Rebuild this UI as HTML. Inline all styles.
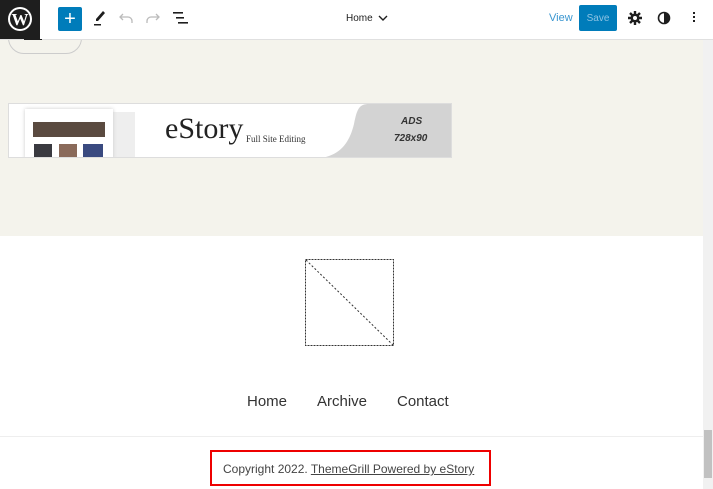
<!DOCTYPE html>
<html><head><style>
*{margin:0;padding:0;box-sizing:border-box}
body{width:713px;height:489px;overflow:hidden;background:#fff;font-family:"Liberation Sans",sans-serif;position:relative}
.abs{position:absolute}
</style></head><body>
<div class="abs" style="left:0;top:40px;width:703px;height:196px;background:#f4f3ec"></div>
<div class="abs" style="left:8px;top:22px;width:74px;height:32px;border:1px solid #ccc;border-radius:16px;background:#f4f3ec"></div>
<div class="abs" style="left:0;top:0;width:713px;height:40px;background:#fff;border-bottom:1px solid #e0e0e0"></div>
<div class="abs" style="left:0;top:0;width:40px;height:39px;background:#1e1e1e"></div>
<div class="abs" style="left:24px;top:39px;width:18px;height:1px;background:#1e1e1e"></div>
<svg class="abs" style="left:7px;top:6px" width="26" height="26" viewBox="0 0 26 26"><circle cx="13" cy="13" r="12" fill="#fff"/><circle cx="13" cy="13" r="10" fill="#1e1e1e"/><text x="13" y="19" font-family="Liberation Serif" font-size="17" font-weight="bold" fill="#fff" text-anchor="middle">W</text></svg>
<div class="abs" style="left:58px;top:7px;width:24px;height:24px;background:#007cba;border-radius:2px;color:#fff;font-size:20px;line-height:24px;text-align:center">+</div>
<svg class="abs" style="left:92px;top:9px" width="16" height="20"><path d="M11 2 L13 4 L6 12 L4 12 L4 10Z" fill="#1e1e1e"/><rect x="2" y="15" width="7" height="1.5" fill="#1e1e1e"/></svg>
<svg class="abs" style="left:119px;top:11px" width="14" height="14"><path d="M4 3 L1 6 L4 9 M1 6 H9 a4 4 0 0 1 4 4 V12" stroke="#bbb" stroke-width="1.3" fill="none"/></svg>
<svg class="abs" style="left:146px;top:11px" width="14" height="14"><path d="M10 3 L13 6 L10 9 M13 6 H5 a4 4 0 0 0 -4 4 V12" stroke="#bbb" stroke-width="1.3" fill="none"/></svg>
<svg class="abs" style="left:173px;top:11px" width="16" height="14"><rect x="0" y="1" width="10" height="1.6" fill="#1e1e1e"/><rect x="3" y="6" width="8" height="1.6" fill="#1e1e1e"/><rect x="5" y="11" width="10" height="1.6" fill="#1e1e1e"/></svg>
<div class="abs" style="left:346px;top:13px;font-size:10px;line-height:12px;color:#1e1e1e">Home</div>
<svg class="abs" style="left:378px;top:15px" width="10" height="7"><path d="M1 1 L5 5 L9 1" stroke="#1e1e1e" stroke-width="1.4" fill="none"/></svg>
<div class="abs" style="left:549px;top:12px;font-size:11px;line-height:13px;color:#3a96d0">View</div>
<div class="abs" style="left:579px;top:5px;width:38px;height:26px;background:#007cba;color:#8ec3e3;font-size:10px;line-height:27px;text-align:center;border-radius:2px">Save</div>
<svg class="abs" style="left:628px;top:11px" width="14" height="14" viewBox="0 0 14 14"><circle cx="7" cy="7" r="4.5" fill="#1e1e1e"/><g stroke="#1e1e1e" stroke-width="2.4"><path d="M7 0V14M0 7H14M2 2L12 12M12 2L2 12"/></g><circle cx="7" cy="7" r="2" fill="#fff"/></svg>
<svg class="abs" style="left:657px;top:11px" width="14" height="14"><circle cx="7" cy="7" r="5.5" stroke="#1e1e1e" stroke-width="1.6" fill="none"/><path d="M7 1.5 A5.5 5.5 0 0 1 7 12.5Z" fill="#1e1e1e"/></svg>
<div class="abs" style="left:693px;top:12px;width:2px;height:2px;background:#1e1e1e;box-shadow:0 4px #1e1e1e,0 8px #1e1e1e"></div>
<div class="abs" style="left:8px;top:103px;width:444px;height:55px;background:#fff;border:1px solid #ddd;overflow:hidden">
 <div class="abs" style="left:102px;top:8px;width:24px;height:47px;background:#eee"></div>
 <div class="abs" style="left:16px;top:5px;width:88px;height:50px;background:#fff;box-shadow:0 0 4px #ccc"></div>
 <div class="abs" style="left:24px;top:18px;width:72px;height:15px;background:#5a4a40"></div>
 <div class="abs" style="left:25px;top:40px;width:18px;height:15px;background:#3a3a40"></div>
 <div class="abs" style="left:50px;top:40px;width:18px;height:15px;background:#8a6a5a"></div>
 <div class="abs" style="left:74px;top:40px;width:20px;height:15px;background:#3a4a80"></div>
 <svg class="abs" style="left:300px;top:0" width="144" height="55"><path d="M50 0 H144 V55 H0 C30 55 40 40 45 20 C48 5 50 0 60 0Z" fill="#d3d3d3"/></svg>
 <div class="abs" style="left:156px;top:8px;font-family:'Liberation Serif',serif;font-size:30px;color:#222">eStory</div>
 <div class="abs" style="left:237px;top:30px;font-family:'Liberation Serif',serif;font-size:9px;color:#333">Full Site Editing</div>
 <div class="abs" style="left:392px;top:12px;font-size:10px;font-style:italic;font-weight:bold;color:#333">ADS</div>
 <div class="abs" style="left:385px;top:29px;font-size:10px;font-style:italic;font-weight:bold;color:#333">728x90</div>
</div>
<svg class="abs" style="left:305px;top:259px" width="90" height="88"><rect x="0.5" y="0.5" width="88" height="86" fill="none" stroke="#333" stroke-dasharray="2 1"/><line x1="1" y1="1" x2="88" y2="86" stroke="#333" stroke-dasharray="2 2"/></svg>
<div class="abs" style="left:247px;top:393px;font-size:15px;color:#333">Home</div>
<div class="abs" style="left:317px;top:393px;font-size:15px;color:#333">Archive</div>
<div class="abs" style="left:397px;top:393px;font-size:15px;color:#333">Contact</div>
<div class="abs" style="left:0;top:436px;width:703px;height:1px;background:#eee"></div>
<div class="abs" style="left:210px;top:450px;width:281px;height:36px;border:2px solid #e00"></div>
<div class="abs" style="left:223px;top:462px;font-size:12px;color:#444">Copyright 2022. <span style="text-decoration:underline">ThemeGrill Powered by eStory</span></div>
<div class="abs" style="left:703px;top:40px;width:10px;height:449px;background:#f1f1f1"></div>
<div class="abs" style="left:704px;top:430px;width:8px;height:48px;background:#c1c1c1"></div>
</body></html>
